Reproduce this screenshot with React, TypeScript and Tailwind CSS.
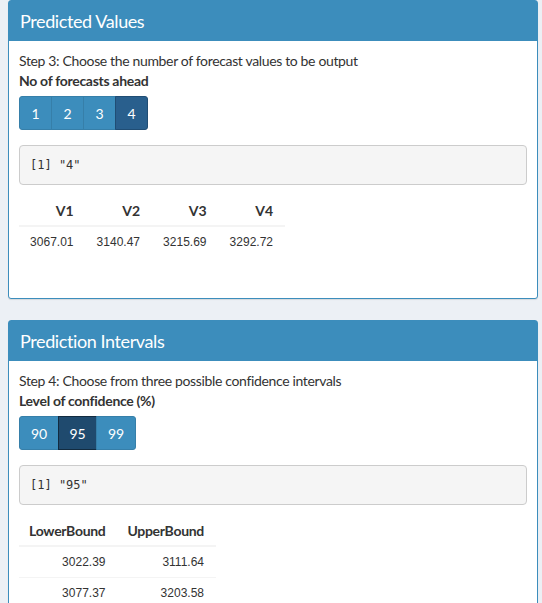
import React from "react";

const sans = { fontFamily: "Lato, 'Noto Sans', sans-serif" };
const num = { fontFamily: "'Liberation Sans', Arial, sans-serif" };

function Btn({ label, active, dark, w }: { label: string; active?: boolean; dark?: boolean; w: string }) {
  const base = "h-[34px] flex items-center justify-center text-white text-[14px] border -ml-px first:ml-0 first:rounded-l-[3px] last:rounded-r-[3px] " + w;
  const color = active
    ? dark
      ? "bg-[#1f4a6e] border-[#122b40]"
      : "bg-[#295f8d] border-[#204d74]"
    : "bg-[#3c8dbc] border-[#367fa9]";
  return <div className={base + " " + color}>{label}</div>;
}

function Box({ title, children, bodyPb }: { title: string; children: React.ReactNode; bodyPb: string }) {
  return (
    <div className="ml-2 w-[530px] border border-[#3c8dbc] rounded-[3px] bg-white shadow-[0_1px_1px_rgba(0,0,0,0.1)] mb-[21px]">
      <div className="h-[40px] bg-[#3c8dbc] flex items-center pl-[11px] text-white text-[18px] tracking-[-0.4px]">{title}</div>
      <div className={"px-[10px] pt-[10px] " + bodyPb}>{children}</div>
    </div>
  );
}

function Pre({ text }: { text: string }) {
  return (
    <div className="h-[40px] border border-[#ccc] bg-[#f5f5f5] rounded-[4px] flex items-center px-[10px] text-[12px] text-[#333]" style={{ fontFamily: "'DejaVu Sans Mono', 'Liberation Mono', monospace" }}>
      {text}
    </div>
  );
}

export default function App() {
  return (
    <div className="h-[603px] bg-[#ecf0f5] overflow-hidden text-[#333]" style={sans}>
      <Box title="Predicted Values" bodyPb="pb-[41px]">
        <div className="text-[14px] leading-[20px] tracking-[-0.35px]">Step 3: Choose the number of forecast values to be output</div>
        <div className="text-[14px] leading-[20px] font-bold tracking-[-0.3px]">No of forecasts ahead</div>
        <div className="flex mt-[5px]">
          <Btn label="1" w="w-[33px]" />
          <Btn label="2" w="w-[33px]" />
          <Btn label="3" w="w-[33px]" />
          <Btn label="4" w="w-[33px]" active />
        </div>
        <div className="mt-[15px]">
          <Pre text={'[1] "4"'} />
        </div>
        <table className="mt-[11px] border-collapse">
          <thead>
            <tr className="border-b-2 border-[#f4f4f4]">
              {["V1", "V2", "V3", "V4"].map((h) => (
                <th key={h} className="w-[66.5px] h-[30px] pr-[12px] text-right font-bold text-[14px]">{h}</th>
              ))}
            </tr>
          </thead>
          <tbody>
            <tr>
              {["3067.01", "3140.47", "3215.69", "3292.72"].map((v) => (
                <td key={v} className="h-[31px] pr-[12px] text-right text-[12px]" style={num}>{v}</td>
              ))}
            </tr>
          </tbody>
        </table>
      </Box>
      <Box title="Prediction Intervals" bodyPb="pb-[40px]">
        <div className="text-[14px] leading-[20px] tracking-[-0.35px]">Step 4: Choose from three possible confidence intervals</div>
        <div className="text-[14px] leading-[20px] font-bold tracking-[-0.3px]">Level of confidence (%)</div>
        <div className="flex mt-[5px]">
          <Btn label="90" w="w-[40px]" />
          <Btn label="95" w="w-[39px]" active dark />
          <Btn label="99" w="w-[40px]" />
        </div>
        <div className="mt-[15px]">
          <Pre text={'[1] "95"'} />
        </div>
        <table className="mt-[11px] border-collapse">
          <thead>
            <tr className="border-b-2 border-[#f4f4f4]">
              {["LowerBound", "UpperBound"].map((h) => (
                <th key={h} className="w-[98.5px] h-[30px] pr-[12px] text-right font-bold text-[14px] tracking-[-0.3px]">{h}</th>
              ))}
            </tr>
          </thead>
          <tbody>
            {[
              ["3022.39", "3111.64"],
              ["3077.37", "3203.58"],
            ].map((r, i) => (
              <tr key={i} className="border-t border-[#f4f4f4]">
                {r.map((v, j) => (
                  <td key={j} className="h-[31px] pr-[12px] text-right text-[12px]" style={num}>{v}</td>
                ))}
              </tr>
            ))}
          </tbody>
        </table>
      </Box>
    </div>
  );
}
